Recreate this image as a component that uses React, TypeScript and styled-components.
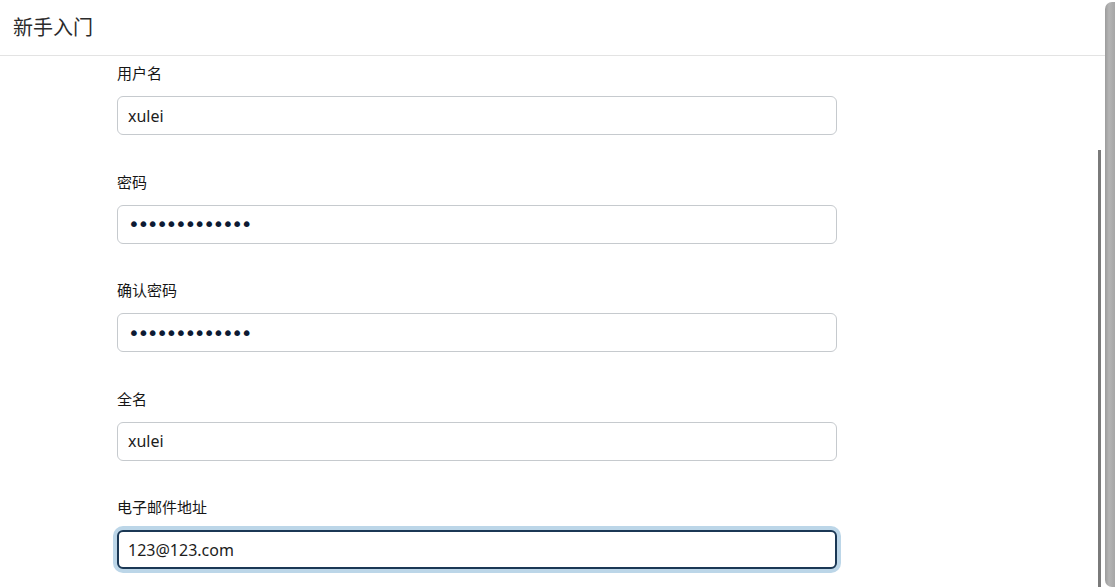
import React from 'react';
import styled, { createGlobalStyle } from 'styled-components';

const GlobalStyle = createGlobalStyle`
    html, body {
        margin: 0;
        padding: 0;
        background: #ffffff;
        overflow: hidden;
    }
    body {
        font-family: "Noto Sans", "Noto Sans CJK SC", sans-serif;
        color: #222;
    }
`;

const Window = styled.div`
    display: flex;
    width: 1115px;
    height: 587px;
    overflow: hidden;
`;

const Panel = styled.div`
    flex: 1;
    display: flex;
    flex-direction: column;
    min-width: 0;
`;

const Header = styled.header`
    height: 56px;
    flex-shrink: 0;
    display: flex;
    align-items: center;
    padding-left: 13px;
    border-bottom: 1px solid #e3e3e3;
    box-sizing: border-box;
`;

const Title = styled.h1`
    margin: 0;
    font-size: 20px;
    font-weight: 400;
    color: #2b2b2b;
    padding-bottom: 2px;
`;

const Body = styled.div`
    flex: 1;
    display: flex;
    min-height: 0;
`;

const Content = styled.div`
    flex: 1;
    overflow: hidden;
    padding: 7px 0 0 117px;
`;

const Form = styled.form`
    width: 720px;
    display: flex;
    flex-direction: column;
`;

const Field = styled.div`
    display: flex;
    flex-direction: column;
    margin-bottom: 36.5px;
`;

const Label = styled.label`
    font-size: 15px;
    line-height: 20px;
    color: #161616;
    margin-bottom: 13px;
`;

const Input = styled.input<{ $focused?: boolean }>`
    box-sizing: border-box;
    height: 39px;
    width: 100%;
    font-family: "Noto Sans", "Noto Sans CJK SC", sans-serif;
    font-size: 16px;
    color: #1c1c1c;
    background: #fff;
    border: ${({ $focused }) => ($focused ? '2px solid #1b3855' : '1px solid #c6cace')};
    border-radius: 6px;
    outline: none;
    box-shadow: ${({ $focused }) => ($focused ? '0 0 0 4px #bcd6e8' : 'none')};
    padding: 0 10px 0 ${({ $focused }) => ($focused ? '9px' : '10px')};

    &[type='password'] {
        font-family: "DejaVu Sans", sans-serif;
        font-size: 20px;
        letter-spacing: -2.4px;
        color: #0d1a33;
    }
`;

const Track = styled.div`
    width: 8px;
    flex-shrink: 0;
    padding-top: 94px;
    box-sizing: border-box;
`;

const Thumb = styled.div`
    width: 3px;
    height: 100%;
    margin-left: 1px;
    background: #7a7a7a;
`;

const Edge = styled.div`
    width: 10px;
    flex-shrink: 0;
    margin-top: 2px;
    border-radius: 7px 0 0 7px;
    background: linear-gradient(to right, #9c9c9c 0%, #b4b4b4 40%, #a6a6a6 100%);
`;

const fields = [
    { label: '用户名', type: 'text', value: 'xulei' },
    { label: '密码', type: 'password', value: 'xulei12345678' },
    { label: '确认密码', type: 'password', value: 'xulei12345678' },
    { label: '全名', type: 'text', value: 'xulei' },
    { label: '电子邮件地址', type: 'email', value: '123@123.com', focused: true },
];

const App: React.FC = () => {
    return (
        <>
            <GlobalStyle />
            <Window>
                <Panel>
                    <Header>
                        <Title>新手入门</Title>
                    </Header>
                    <Body>
                        <Content>
                            <Form onSubmit={(e) => e.preventDefault()}>
                                {fields.map((f, i) => (
                                    <Field key={i}>
                                        <Label htmlFor={`field-${i}`}>{f.label}</Label>
                                        <Input
                                            id={`field-${i}`}
                                            type={f.type}
                                            defaultValue={f.value}
                                            $focused={f.focused}
                                            readOnly
                                        />
                                    </Field>
                                ))}
                            </Form>
                        </Content>
                        <Track>
                            <Thumb />
                        </Track>
                    </Body>
                </Panel>
                <Edge />
            </Window>
        </>
    );
};

export default App;
